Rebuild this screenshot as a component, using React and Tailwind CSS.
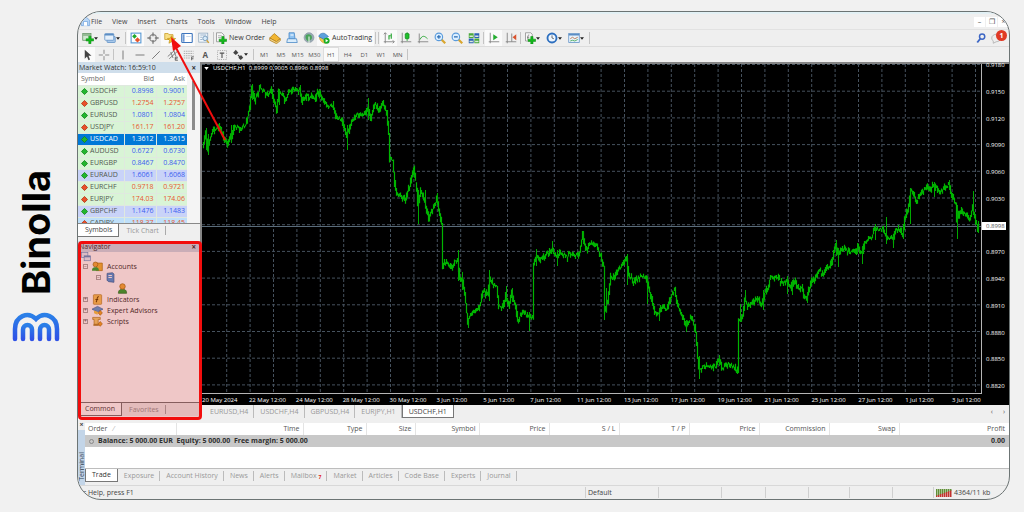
import clsx from 'clsx';

const MENUS = ['File', 'View', 'Insert', 'Charts', 'Tools', 'Window', 'Help'];
const TIMEFRAMES = ['M1', 'M5', 'M15', 'M30', 'H1', 'H4', 'D1', 'W1', 'MN'];

const SYMBOLS = [
  { name: 'USDCHF', bid: '0.8998', ask: '0.9001', up: true, tone: 'green' },
  { name: 'GBPUSD', bid: '1.2754', ask: '1.2757', up: false, tone: 'green' },
  { name: 'EURUSD', bid: '1.0801', ask: '1.0804', up: true, tone: 'green' },
  { name: 'USDJPY', bid: '161.17', ask: '161.20', up: false, tone: 'green' },
  { name: 'USDCAD', bid: '1.3612', ask: '1.3615', up: true, tone: 'selected' },
  { name: 'AUDUSD', bid: '0.6727', ask: '0.6730', up: true, tone: 'green' },
  { name: 'EURGBP', bid: '0.8467', ask: '0.8470', up: true, tone: 'green' },
  { name: 'EURAUD', bid: '1.6061', ask: '1.6068', up: true, tone: 'lavender' },
  { name: 'EURCHF', bid: '0.9718', ask: '0.9721', up: false, tone: 'green' },
  { name: 'EURJPY', bid: '174.03', ask: '174.06', up: false, tone: 'green' },
  { name: 'GBPCHF', bid: '1.1476', ask: '1.1483', up: true, tone: 'lavender' },
  { name: 'CADJPY', bid: '118.37', ask: '118.45', up: false, tone: 'blue' },
];

const ROW_TONES = {
  green: 'bg-[#d9f4d6]',
  lavender: 'bg-[#c9d3f8]',
  blue: 'bg-[#bfe0fa]',
  selected: 'bg-[#0078d7]',
};

const PRICES = [
  '0.9180', '0.9150', '0.9120', '0.9090', '0.9060', '0.9030', '0.8998',
  '0.8970', '0.8940', '0.8910', '0.8880', '0.8850', '0.8820',
];

const TIMES = [
  '20 May 2024', '22 May 12:00', '24 May 12:00', '28 May 12:00', '30 May 12:00', '3 Jun 12:00',
  '5 Jun 12:00', '7 Jun 12:00', '11 Jun 12:00', '13 Jun 12:00', '17 Jun 12:00', '19 Jun 12:00',
  '21 Jun 12:00', '25 Jun 12:00', '27 Jun 12:00', '1 Jul 12:00', '3 Jul 12:00',
];

const CHART_TABS = ['EURUSD,H4', 'USDCHF,H4', 'GBPUSD,H4', 'EURJPY,H1', 'USDCHF,H1'];

const TERMINAL_TABS = [
  'Trade', 'Exposure', 'Account History', 'News', 'Alerts', 'Mailbox',
  'Market', 'Articles', 'Code Base', 'Experts', 'Journal',
];

// Price path through the session, in chart units
const TRACE = [
  [203, 147], [206, 132], [208, 148], [211, 138], [213, 132], [220, 126], [224, 136], [227, 144], [232, 136],
  [235, 126], [240, 129], [246, 125], [250, 108], [252, 88], [255, 101], [260, 88], [263, 90], [268, 96],
  [271, 91], [274, 101], [277, 109], [279, 93], [282, 93], [285, 100], [290, 91], [295, 90], [300, 91],
  [302, 101], [307, 96], [315, 98], [319, 91], [323, 100], [327, 105], [333, 106], [337, 118], [342, 120],
  [347, 136], [352, 121], [357, 115], [365, 115], [368, 108], [371, 118], [375, 103], [379, 110], [383, 102],
  [387, 113], [389, 135], [390, 159], [393, 160], [395, 183], [397, 193], [401, 196], [405, 200], [410, 186],
  [414, 168], [417, 188], [418, 204], [421, 191], [425, 201], [429, 218], [432, 211], [437, 199], [440, 214],
  [442, 223], [443, 266], [447, 262], [452, 269], [455, 262], [458, 261], [460, 278], [463, 283], [466, 303],
  [468, 321], [472, 313], [477, 311], [481, 303], [483, 290], [488, 296], [490, 278], [493, 285], [497, 287],
  [499, 307], [503, 308], [506, 295], [509, 306], [512, 293], [516, 307], [518, 321], [523, 310], [529, 318],
  [533, 317], [534, 263], [536, 256], [540, 260], [545, 256], [552, 249], [557, 258], [560, 252], [567, 257],
  [570, 253], [576, 256], [580, 252], [583, 234], [586, 249], [592, 243], [597, 247], [601, 255], [604, 267],
  [605, 311], [608, 302], [611, 277], [615, 279], [618, 270], [622, 265], [627, 259], [629, 275], [634, 282],
  [640, 278], [645, 276], [648, 283], [651, 297], [655, 312], [659, 313], [663, 307], [667, 309], [671, 297],
  [675, 289], [678, 306], [683, 317], [686, 326], [692, 317], [696, 332], [698, 357], [699, 368], [703, 367],
  [710, 366], [713, 366], [716, 367], [719, 358], [722, 368], [728, 364], [733, 367], [738, 371], [739, 320],
  [743, 317], [745, 299], [748, 307], [753, 303], [757, 298], [762, 304], [765, 293], [768, 288], [771, 277],
  [778, 278], [782, 284], [787, 280], [791, 289], [795, 280], [799, 289], [802, 287], [804, 296], [807, 297],
  [811, 283], [815, 278], [819, 270], [823, 275], [827, 267], [830, 268], [833, 257], [836, 244], [838, 255],
  [842, 248], [848, 251], [855, 253], [858, 248], [862, 253], [865, 242], [872, 237], [875, 229], [883, 229],
  [887, 237], [893, 240], [896, 229], [900, 230], [903, 235], [905, 220], [909, 207], [911, 190], [913, 192],
  [917, 202], [921, 193], [927, 187], [930, 192], [934, 185], [940, 193], [945, 188], [949, 184], [952, 197],
  [956, 203], [957, 221], [961, 210], [966, 215], [970, 218], [973, 208], [975, 217], [978, 228], [979, 223],
];

// Long wicks: [x, high, low]
const WICKS = [
  [206, 128, 150], [208, 134, 155], [231, 125, 143], [252, 84, 100], [277, 100, 113], [279, 89, 105],
  [300, 85, 95], [319, 89, 97], [347, 125, 150], [368, 98, 120], [418, 190, 224], [425, 190, 207],
  [437, 193, 205], [458, 250, 281], [462, 272, 290], [468, 318, 328], [489, 270, 301], [506, 286, 300],
  [512, 288, 302], [529, 312, 331], [536, 249, 266], [552, 241, 252], [557, 250, 266], [583, 231, 244],
  [604, 266, 320], [606, 288, 312], [627, 254, 285], [647, 276, 304], [659, 308, 321], [686, 320, 332],
  [699, 356, 379], [719, 355, 366], [740, 304, 322], [745, 290, 302], [763, 290, 310], [787, 276, 294],
  [792, 280, 295], [807, 292, 303], [836, 240, 256], [838, 248, 267], [857, 243, 254], [862, 246, 264],
  [875, 224, 240], [886, 217, 244], [893, 236, 248], [903, 228, 239], [910, 188, 224], [934, 182, 197],
  [949, 180, 190], [957, 205, 239], [973, 191, 215], [978, 221, 233],
];

const range = n => Array.from({ length: n }, (_, i) => i);

// Small repeatable wobble so that neighbouring bars differ
const noise = (x, seed) => {
  const v = Math.sin(x * 12.9898 + seed * 78.233) * 43758.5453;
  return v - Math.floor(v);
};

function buildBars() {
  let d = '';
  for (let i = 1; i < TRACE.length; i++) {
    const [x0, y0] = TRACE[i - 1];
    const [x1, y1] = TRACE[i];
    const slope = (y1 - y0) / (x1 - x0);
    for (let x = x0; x < x1; x++) {
      const shift = (noise(x, 1) - 0.5) * 3;
      const y = y0 + slope * (x - x0) + shift;
      const hi = 0.5 + noise(x, 2) ** 2 * 3.5;
      const lo = 0.5 + noise(x, 3) ** 2 * 3.5;
      d += `M${x + 0.5} ${(Math.min(y, y + slope) - hi).toFixed(1)}V${(Math.max(y, y + slope) + lo).toFixed(1)}`;
    }
  }
  return d;
}

const BARS = buildBars();
const WICK_PATH = WICKS.map(([x, hi, lo]) => `M${x + 0.5} ${hi}V${lo}`).join('');

function Icon({ children, size = 'size-3' }) {
  return (
    <svg viewBox="0 0 16 16" className={clsx('shrink-0', size)} fill="none" aria-hidden="true">
      {children}
    </svg>
  );
}

const Plus = ({ x = 10, y = 10 }) => (
  <path d={`M${x - 1.5} ${y - 5}h3v3.5h3.5v3h-3.5v3.5h-3v-3.5h-3.5v-3h3.5z`} fill="#14b81c" stroke="#0a8a12" strokeWidth=".7" />
);

const ICONS = {
  newChart: (
    <Icon>
      <rect x="1" y="2" width="11" height="9" fill="#cfe6cf" stroke="#5d8f5d" />
      <path d="M1.5 4h10" stroke="#5d8f5d" strokeWidth="1.5" />
      <Plus x={10.5} y={10.5} />
    </Icon>
  ),
  profiles: (
    <Icon>
      <rect x="4" y="6" width="11" height="8" rx="1" fill="#a9c9ea" stroke="#5b8dc4" />
      <rect x="1" y="2" width="12" height="9" rx="1" fill="#e5f0fb" stroke="#5b8dc4" />
      <path d="M1 3.5h12" stroke="#5b8dc4" strokeWidth="2" />
    </Icon>
  ),
  marketWatch: (
    <Icon>
      <rect x="1.5" y="1.5" width="13" height="13" fill="#fff" stroke="#5b9bd5" strokeWidth="1.5" />
      <path d="M6 2.5l3.200 3.200L6 9 2.800 5.700z" fill="#1fa82c" />
      <path d="M10 7l3.500 3.500L10 14l-3.500-3.500z" fill="#e8542a" />
    </Icon>
  ),
  dataWindow: (
    <Icon>
      <circle cx="8" cy="8" r="4.500" stroke="#8a8a8a" strokeWidth="1.500" />
      <path d="M8 .5v5M8 10.500v5M.5 8h5M10.500 8h5" stroke="#7a7a7a" strokeWidth="1.800" />
    </Icon>
  ),
  navigator: (
    <Icon>
      <path d="M1 2h4.500l1 1.500H12V10H1z" fill="#f8df84" stroke="#c79a22" />
      <path d="M10 5l1.700 3.300 3.800.4-2.800 2.500.9 3.800-3.600-1.900-3.400 1.900.8-3.800-2.800-2.500 3.700-.4z" fill="#f7c52b" stroke="#b98a12" strokeWidth=".8" />
    </Icon>
  ),
  terminal: (
    <Icon>
      <rect x="1" y="2" width="14" height="12" rx="1" fill="#fff" stroke="#3f76bd" strokeWidth="1.500" />
      <path d="M3.500 3v10" stroke="#6f9bd4" strokeWidth="2.500" />
      <path d="M7 6h6" stroke="#b8cde6" />
    </Icon>
  ),
  tester: (
    <Icon>
      <rect x="1" y="1.500" width="12" height="12" fill="#f4f8fc" stroke="#8aa4bd" />
      <path d="M3 4h8M3 7h3M3 10h3" stroke="#7f9fbe" />
      <circle cx="9.500" cy="8.500" r="3" fill="#d7ebfa" stroke="#5d87ad" />
      <path d="M11.500 11l3 3.500" stroke="#d2a33d" strokeWidth="2" />
    </Icon>
  ),
  newOrder: (
    <Icon>
      <path d="M2 1h7l3 3v9H2z" fill="#f8f8f8" stroke="#8a8a8a" />
      <path d="M4 5h5M4 7.500h4" stroke="#9b9b9b" />
      <Plus x={10.5} y={11} />
    </Icon>
  ),
  book: (
    <Icon>
      <path d="M1 8l6-6 8 7-5 4z" fill="#f2b632" stroke="#ad7a14" />
      <path d="M1 8v3l9 4.500 5-4V9l-5 4z" fill="#f8d88a" stroke="#ad7a14" />
    </Icon>
  ),
  signals: (
    <Icon>
      <path d="M4 1h7l1 8H4z" fill="#8fc3f2" stroke="#4384c4" />
      <path d="M2 9h12l1 5H1z" fill="#d9ecfb" stroke="#4384c4" />
      <path d="M6 4h4" stroke="#fff" strokeWidth="1.500" />
    </Icon>
  ),
  globe: (
    <Icon>
      <circle cx="8" cy="7.500" r="6.500" fill="#9aa9b5" stroke="#8b99a4" />
      <path d="M4 4c3-2 8-1 8 3s-3 3-4 6c-3-1-6-5-4-9z" fill="#49a35b" />
      <path d="M8 6v9" stroke="#e9f2ea" strokeWidth="1.500" />
    </Icon>
  ),
  autoTrading: (
    <Icon>
      <path d="M2 7c0 5 5 8 8 8l2-5-4-2z" fill="#f4c949" stroke="#b78d1f" strokeWidth=".8" />
      <path d="M1 6c1-4 5-5 8-4l5 4-6 4z" fill="#5ba0dc" stroke="#2e6fae" strokeWidth=".8" />
      <circle cx="11.500" cy="11.500" r="4" fill="#17ad25" />
      <path d="M10.200 9.300l3.500 2.200-3.500 2.200z" fill="#fff" />
    </Icon>
  ),
  barChart: (
    <Icon>
      <path d="M3 1v14M1 13h14M1 3l2-2 2 2M13 11l2 2-2 2" stroke="#858585" strokeWidth="1.200" />
      <path d="M8 10V5h2M11 9V2" stroke="#21a32c" strokeWidth="1.500" />
    </Icon>
  ),
  candles: (
    <Icon>
      <path d="M3 1v14M1 13h14" stroke="#858585" strokeWidth="1.200" />
      <path d="M9.500 0v12" stroke="#21a32c" />
      <rect x="7" y="2" width="5" height="7" rx="1" fill="#1fc02c" stroke="#118b1b" />
    </Icon>
  ),
  lineChart: (
    <Icon>
      <path d="M3 2v13M1 13h14" stroke="#858585" strokeWidth="1.200" />
      <path d="M4 10c3-6 6-5 10-1" stroke="#21a32c" strokeWidth="1.200" />
    </Icon>
  ),
  zoomIn: (
    <Icon>
      <path d="M10 10l5 5" stroke="#d9a62f" strokeWidth="3" />
      <circle cx="6.500" cy="6.500" r="5" fill="#dcefff" stroke="#5a9bdc" strokeWidth="1.500" />
      <path d="M6.500 4v5M4 6.500h5" stroke="#2a6bb3" strokeWidth="1.500" />
    </Icon>
  ),
  zoomOut: (
    <Icon>
      <path d="M10 10l5 5" stroke="#d9a62f" strokeWidth="3" />
      <circle cx="6.500" cy="6.500" r="5" fill="#dcefff" stroke="#5a9bdc" strokeWidth="1.500" />
      <path d="M4 6.500h5" stroke="#2a6bb3" strokeWidth="1.500" />
    </Icon>
  ),
  tile: (
    <Icon>
      <path d="M1 1.500h6.500V8H1zM8.500 8.500H15V15H8.500z" fill="#4aa83c" />
      <path d="M8.500 1.500H15V8H8.500zM1 8.500h6.500V15H1z" fill="#2c62b5" />
      <path d="M2 5.500h4.500M9.500 5.500H14M2 12.500h4.500M9.500 12.500H14" stroke="#dcebdc" strokeWidth="2" />
    </Icon>
  ),
  autoScroll: (
    <Icon>
      <path d="M3 1v14M1 13h14" stroke="#858585" strokeWidth="1.200" />
      <path d="M7 3l6 4-6 4z" fill="#24ad30" />
    </Icon>
  ),
  chartShift: (
    <Icon>
      <path d="M3 1v14M1 13h14M9 2v11" stroke="#858585" strokeWidth="1.200" />
      <path d="M15 3l-5 4 5 4z" fill="#d9532e" />
    </Icon>
  ),
  indicators: (
    <Icon>
      <path d="M2 1h7l2 2v9H2z" fill="#f8f8f8" stroke="#8a8a8a" />
      <path d="M7 4c-2 0-2 1-2 6M4 7h3" stroke="#666" />
      <Plus x={10.5} y={11} />
    </Icon>
  ),
  clock: (
    <Icon>
      <circle cx="8" cy="8" r="6" fill="#eef6ff" stroke="#2d6fbf" strokeWidth="2.500" />
      <path d="M8 4.500V8l2.500 1" stroke="#444" />
    </Icon>
  ),
  template: (
    <Icon>
      <rect x="1" y="2" width="14" height="12" fill="#e8f3fd" stroke="#5b8dc4" />
      <path d="M1 3.500h14" stroke="#5b8dc4" strokeWidth="2" />
      <path d="M3 9l3-2 3 2 4-2" stroke="#b2622c" />
      <path d="M3 12l3-1 3 1 4-2" stroke="#2e9c3c" />
    </Icon>
  ),
  cursor: (
    <Icon>
      <path d="M5 1v12l3-3 2 5 2-1-2-5h4z" fill="#444" />
    </Icon>
  ),
  cross: (
    <Icon>
      <path d="M8 1v5.500M8 9.500V15M1 8h5.500M9.500 8H15" stroke="#8a8a8a" strokeWidth="1.300" />
    </Icon>
  ),
  vLine: <Icon><path d="M8 2v12" stroke="#777" strokeWidth="1.300" /></Icon>,
  hLine: <Icon><path d="M2 8h12" stroke="#777" strokeWidth="1.300" /></Icon>,
  trend: <Icon><path d="M3 13L13 3" stroke="#777" strokeWidth="1.300" /></Icon>,
  channel: (
    <Icon>
      <path d="M1 10l9-8M3 13L14 3M5 4l3 8M9 2l3 8" stroke="#777" strokeWidth="1.200" />
      <path d="M14.500 11H11v4h3.500M11 13h3" stroke="#444" />
    </Icon>
  ),
  fibo: (
    <Icon>
      <path d="M1 3h13M1 6h13M1 9h13M1 12h8" stroke="#999" strokeDasharray="2 1" />
      <path d="M14.500 10.500H11.500V15M11.500 13h2.500" stroke="#444" />
    </Icon>
  ),
  label: (
    <Icon>
      <rect x="2" y="2" width="12" height="12" stroke="#999" strokeDasharray="1.500 1.500" />
      <path d="M5 5.500h6M8 5.500V12" stroke="#555" strokeWidth="1.500" />
    </Icon>
  ),
  arrows: (
    <Icon>
      <path d="M5 1l3.500 4-3.500 3-3.500-3z" fill="#444" />
      <path d="M8 8l3 3" stroke="#444" strokeWidth="1.500" />
      <path d="M12 8l3 3.500-3.500 3-3-3z" fill="#444" />
    </Icon>
  ),
};

function Caret() {
  return (
    <svg viewBox="0 0 6 4" className="h-[3px] w-1 shrink-0" aria-hidden="true">
      <path d="M0 0h6L3 4z" fill="#222" />
    </svg>
  );
}

function Divider() {
  return <span className="mx-px my-0.5 w-px shrink-0 self-stretch bg-[#c4c4c4]" />;
}

function ToolButton({ icon, label, active, className }) {
  return (
    <button
      aria-label={label}
      className={clsx('flex h-4 w-[17px] shrink-0 items-center justify-center', active && 'bg-[#fafafa]', className)}
    >
      {ICONS[icon]}
    </button>
  );
}

function SplitButton({ icon, label }) {
  return (
    <button aria-label={label} className="flex h-4 w-[22px] shrink-0 items-center pl-0.5">
      {ICONS[icon]}
      <Caret />
    </button>
  );
}

function Brand() {
  return (
    <aside className="flex w-[77px] shrink-0 flex-col items-center justify-center gap-4 pr-1.5">
      <span className="rotate-180 font-['Inter'] text-[38px] leading-[44px] font-bold text-black [writing-mode:vertical-rl]">
        Binolla
      </span>
      <svg viewBox="0 0 48 30" className="h-[30px] w-12" fill="none" aria-hidden="true">
        <defs>
          <linearGradient id="brand" x1="0" y1="0" x2="0" y2="1">
            <stop offset="0" stopColor="#2b80e8" />
            <stop offset="1" stopColor="#2f52e6" />
          </linearGradient>
        </defs>
        <g stroke="url(#brand)" strokeWidth="4.500" strokeLinecap="round">
          <path d="M3 27V17C3 4 16-1 24 7C32-1 45 4 45 17V27" />
          <path d="M11 27V17.500a4.500 4.500 0 0 1 9 0V27" />
          <path d="M28 27V17.500a4.500 4.500 0 0 1 9 0V27" />
        </g>
      </svg>
    </aside>
  );
}

function MenuBar() {
  return (
    <header className="flex h-[17px] shrink-0 items-center border-t-2 border-[#e3f1f5] pl-0.5 text-[#444]">
      <Icon size="size-[11px]">
        <path d="M2 6l6-5 6 5v8H2z" fill="#b9d7f7" stroke="#6a9fdc" />
        <path d="M5 14V8h6v6" fill="#fff" stroke="#6a9fdc" />
      </Icon>
      <nav className="flex gap-2.5 pt-px">
        {MENUS.map(m => (
          <button key={m}>{m}</button>
        ))}
      </nav>
      <div className="ml-auto flex gap-px">
        {['–', '❐', '×'].map((c, i) => (
          <button
            key={c}
            aria-label={['Minimize', 'Restore', 'Close'][i]}
            className="flex h-2.5 w-[11px] items-center justify-center bg-white text-[#555]"
          >
            {c}
          </button>
        ))}
      </div>
    </header>
  );
}

function StandardToolbar() {
  return (
    <div className="flex h-[17px] shrink-0 items-center border-t border-[#e2e2e2] pl-0.5 text-[#333]">
      <SplitButton icon="newChart" label="New chart" />
      <SplitButton icon="profiles" label="Profiles" />
      <Divider />
      <ToolButton icon="marketWatch" label="Market Watch" active />
      <ToolButton icon="dataWindow" label="Data Window" />
      <ToolButton icon="navigator" label="Navigator" active />
      <ToolButton icon="terminal" label="Terminal" active />
      <ToolButton icon="tester" label="Strategy Tester" />
      <Divider />
      <button className="flex w-[51px] items-center gap-0.5 whitespace-nowrap">
        {ICONS.newOrder}
        New Order
      </button>
      <ToolButton icon="book" label="MetaEditor" />
      <ToolButton icon="signals" label="Signals" />
      <ToolButton icon="globe" label="Community" />
      <button className="flex h-4 w-[57px] items-center gap-0.5 bg-[#fafafa] pl-px whitespace-nowrap">
        {ICONS.autoTrading}
        AutoTrading
      </button>
      <Divider />
      <Divider />
      <ToolButton icon="barChart" label="Bar chart" active />
      <ToolButton icon="candles" label="Candlesticks" />
      <ToolButton icon="lineChart" label="Line chart" />
      <ToolButton icon="zoomIn" label="Zoom in" />
      <ToolButton icon="zoomOut" label="Zoom out" />
      <ToolButton icon="tile" label="Tile windows" />
      <Divider />
      <ToolButton icon="autoScroll" label="Auto scroll" active />
      <ToolButton icon="chartShift" label="Chart shift" />
      <Divider />
      <SplitButton icon="indicators" label="Indicators" />
      <SplitButton icon="clock" label="Periods" />
      <SplitButton icon="template" label="Templates" />
      <Divider />
      <div className="ml-auto flex items-center gap-1 pr-0.5">
        <button aria-label="Search">
          <Icon>
            <circle cx="9.500" cy="6" r="3.500" stroke="#3d66c4" strokeWidth="2" />
            <path d="M7 9l-4 5" stroke="#3d66c4" strokeWidth="2.500" />
          </Icon>
        </button>
        <button className="relative flex h-4 w-4 items-center" aria-label="Notifications">
          <Icon>
            <path d="M1 8c0-3 3-5 6-5s6 2 6 5-3 5-6 5l-4 2v-3C2 11 1 10 1 8z" fill="#eee" stroke="#aaa" />
          </Icon>
          <span className="absolute top-0 right-0 flex size-[11px] items-center justify-center rounded-full bg-[#e03a26] font-bold text-white">
            1
          </span>
        </button>
      </div>
    </div>
  );
}

function LineToolbar() {
  return (
    <div className="flex h-4 shrink-0 items-center border-t border-[#dcdcdc] text-[6px] text-[#555]">
      <ToolButton icon="cursor" label="Cursor" active />
      <ToolButton icon="cross" label="Crosshair" />
      <Divider />
      <div className="grid w-[115px] grid-cols-7 justify-items-center">
        <ToolButton icon="vLine" label="Vertical line" />
        <ToolButton icon="hLine" label="Horizontal line" />
        <ToolButton icon="trend" label="Trendline" />
        <ToolButton icon="channel" label="Channel" />
        <ToolButton icon="fibo" label="Fibonacci" />
        <button className="text-[8px] font-bold" aria-label="Text">A</button>
        <ToolButton icon="label" label="Text label" />
      </div>
      <SplitButton icon="arrows" label="Arrows" />
      <Divider />
      <div className="grid h-full w-[151px] grid-cols-9 pl-px">
        {TIMEFRAMES.map(t => (
          <button key={t} className={clsx(t === 'H1' && 'border border-[#ddd] bg-[#fafafa]')}>
            {t}
          </button>
        ))}
      </div>
      <Divider />
    </div>
  );
}

function PanelTitle({ children }) {
  return (
    <div className="flex h-[11px] shrink-0 items-center justify-between bg-[#cfdeeb] pr-1 pl-px text-[#333]">
      <span>{children}</span>
      <button aria-label={`Close ${children}`} className="text-[8px] font-bold">×</button>
    </div>
  );
}

function PanelTabs({ tabs }) {
  return (
    <div className="flex h-[13px] shrink-0 bg-[#efefef]">
      {tabs.map((t, i) => (
        <button
          key={t}
          className={clsx(
            'border-[#777] pr-1.5 pl-[7px]',
            i === 0 ? 'border-r border-b bg-white text-[#444]' : 'text-[#999]',
          )}
        >
          {t}
        </button>
      ))}
      <span className="my-0.5 w-px bg-[#aaa]" />
      <span className="flex-1" />
    </div>
  );
}

function MarketWatch() {
  return (
    <section className="shrink-0 bg-white">
      <PanelTitle>Market Watch: 16:59:10</PanelTitle>
      <div className="flex h-[151px] overflow-hidden border-b border-[#888]">
        <table className="w-[109px] table-fixed border-collapse self-start">
          <colgroup>
            <col className="w-[46px]" />
            <col className="w-8" />
            <col />
          </colgroup>
          <thead>
            <tr className="h-3 text-[#666]">
              <th className="pl-[3px] text-left font-normal">Symbol</th>
              <th className="pr-0.5 text-right font-normal">Bid</th>
              <th className="pr-0.5 text-right font-normal">Ask</th>
            </tr>
          </thead>
          <tbody>
            {SYMBOLS.map(s => {
              const selected = s.tone === 'selected';
              const price = selected ? 'text-white' : s.up ? 'text-[#3a5cf0]' : 'text-[#e8562f]';
              return (
                <tr key={s.name} className={clsx('h-3', ROW_TONES[s.tone])}>
                  <td className={clsx('border-t border-[#dfe9df] pl-[3px]', selected ? 'text-white' : 'text-[#505850]')}>
                    <span className="flex items-center gap-0.5">
                      <svg viewBox="0 0 8 8" className="size-[7px]" aria-hidden="true">
                        <path
                          d="M4 .5L7.500 4 4 7.500.5 4z"
                          fill={s.up ? '#22b52e' : '#e8502a'}
                          stroke={s.up ? '#128a1c' : '#b5391a'}
                        />
                      </svg>
                      {s.name}
                    </span>
                  </td>
                  <td className={clsx('border-t border-l border-[#dfe9df] pr-0.5 text-right', price)}>{s.bid}</td>
                  <td className={clsx('border-t border-l border-[#dfe9df] pr-0.5 text-right', price)}>{s.ask}</td>
                </tr>
              );
            })}
          </tbody>
        </table>
        <div className="flex flex-1 justify-center bg-[#f4f4f4] pt-2">
          <span className="h-[49px] w-[3px] bg-[#8b8b8b]" />
        </div>
      </div>
      <PanelTabs tabs={['Symbols', 'Tick Chart']} />
    </section>
  );
}

function TreeRow({ indent, box, icon, children }) {
  return (
    <li className={clsx('flex h-[11px] items-center gap-1', indent)}>
      {box && (
        <span className="flex size-[5px] items-center justify-center border border-[#aaa] text-[5px] leading-none text-[#555]">
          {box}
        </span>
      )}
      <Icon size="size-[11px]">{icon}</Icon>
      {children}
    </li>
  );
}

const person = (
  <>
    <path d="M2 15c0-5 3-6 6-6s6 1 6 6z" fill="#2eab38" stroke="#197323" />
    <circle cx="8" cy="5" r="4" fill="#f0b040" stroke="#9b6f16" />
  </>
);

function Navigator() {
  return (
    <section className="relative mt-1 flex flex-1 flex-col bg-white text-[#333]">
      <PanelTitle>Navigator</PanelTitle>
      <div className="flex h-[9px] items-center pl-[3px]">
        <Icon size="size-2.5">
          <rect x="1" y="1" width="10" height="8" fill="#e5f0fb" stroke="#5b8dc4" />
          <rect x="5" y="6" width="10" height="8" fill="#e5f0fb" stroke="#5b8dc4" />
          <path d="M5 7.500h10" stroke="#5b8dc4" strokeWidth="2" />
        </Icon>
      </div>
      <ul className="pl-[5px]">
        <TreeRow
          box="−"
          icon={
            <>
              <path d="M6 3h9v11H6z" fill="#f0b83a" stroke="#a87a16" />
              <circle cx="5" cy="5" r="3.500" fill="#f0b040" stroke="#9b6f16" />
              <path d="M0 14c0-5 3-5 5-5s5 0 5 5z" fill="#2eab38" />
            </>
          }
        >
          Accounts
        </TreeRow>
        <TreeRow
          indent="pl-[13px]"
          box="−"
          icon={
            <>
              <path d="M3 2l8-1 2 2v12l-8-1-2-2z" fill="#4f9be0" stroke="#28639c" />
              <path d="M5 5h5M5 8h5" stroke="#fff" strokeWidth="1.500" />
            </>
          }
        />
        <TreeRow indent="pl-[34px]" icon={person} />
        <TreeRow
          box="+"
          icon={
            <>
              <rect x="2" y="1" width="12" height="14" rx="1" fill="#f6c75c" stroke="#b3842a" />
              <path d="M10 4c-3-1-2 4-4 8M5 8h4" stroke="#664708" strokeWidth="1.500" />
            </>
          }
        >
          Indicators
        </TreeRow>
        <TreeRow
          box="+"
          icon={
            <>
              <path d="M0 6l8-4 8 4-8 4z" fill="#5ba0dc" stroke="#2e6fae" />
              <path d="M3 8v4l5 2 1-4z" fill="#f4c949" />
              <path d="M12 8l3 3.500-3 3.500-3-3.500z" fill="#f0a92a" stroke="#a97012" />
            </>
          }
        >
          Expert Advisors
        </TreeRow>
        <TreeRow
          box="+"
          icon={
            <>
              <path d="M1 2h11v3H9v7H3V5H1z" fill="#f3cf72" stroke="#a97a1c" />
              <path d="M2 13h8" stroke="#a97a1c" strokeWidth="2" />
              <path d="M12 8l3 3.500-3 3.500-3-3.500z" fill="#f0a92a" stroke="#a97012" />
            </>
          }
        >
          Scripts
        </TreeRow>
      </ul>
      <div className="mt-auto border-t border-[#777] pb-1">
        <PanelTabs tabs={['Common', 'Favorites']} />
      </div>
      {/* Highlight frame */}
      <div className="pointer-events-none absolute inset-y-0 left-0 -right-0.5 z-10 rounded border-3 border-[#f20d0d] bg-[#b40000]/22" />
    </section>
  );
}

function Chart() {
  return (
    <div className="flex min-w-0 flex-1 flex-col">
      <div className="relative flex flex-1 flex-col border-t-2 border-l-2 border-[#858585] bg-black text-[6px] leading-[8px] text-white">
        <div className="flex flex-1">
          <div className="relative min-w-0 flex-1 border-r border-b border-[#b5b5b5]">
            <svg
              viewBox="202 64 779 329"
              preserveAspectRatio="none"
              className="absolute inset-0 h-full w-full"
              fill="none"
              role="img"
              aria-label="USDCHF hourly price"
            >
              <g stroke="#46525e" strokeDasharray="3 2">
                {range(33).map(i => (
                  <path key={i} d={`M${226.7 + i * 23.4} 64V393`} />
                ))}
                {range(13).map(i => (
                  <path key={i} d={`M202 ${64.5 + i * 26.7}H981`} />
                ))}
              </g>
              <path d="M202 226.500H981" stroke="#5a6c7b" />
              <path d={BARS} stroke="#00b400" strokeWidth="1.200" />
              <path d={WICK_PATH} stroke="#00a800" />
            </svg>
            <p className="absolute top-0 left-0.5 flex items-center gap-1 whitespace-pre">
              <svg viewBox="0 0 6 4" className="h-[3px] w-[5px]" aria-hidden="true">
                <path d="M0 0h6L3 4z" fill="#fff" />
              </svg>
              USDCHF,H1  0.8999 0.9005 0.8996 0.8998
            </p>
          </div>
          <div className="-mt-[3px] flex w-[27px] flex-col justify-between pb-1">
            {PRICES.map((p, i) => (
              <span key={p} className={clsx('w-6 pl-1', i === 6 && 'bg-white text-[#555]')}>
                {p}
              </span>
            ))}
          </div>
        </div>
        <div className="flex h-[11px] items-center pr-2.5">
          {TIMES.map(t => (
            <span key={t} className="w-0 flex-1 whitespace-nowrap">
              {t}
            </span>
          ))}
        </div>
      </div>
      <div className="flex h-[15px] shrink-0 items-start pl-1 text-[#999]">
        {CHART_TABS.map((t, i) => (
          <button
            key={t}
            className={clsx(
              'h-[13px] pt-px pl-1.5',
              i === 4 ? 'border border-t-0 border-[#777] bg-white pr-1.5 text-[#444]' : 'border-r border-[#bbb] pr-[5px]',
            )}
          >
            {t}
          </button>
        ))}
        <div className="ml-auto flex h-[13px] items-center gap-2.5 pr-1 text-[#555]">
          <button aria-label="Previous tab">‹</button>
          <button aria-label="Next tab">›</button>
        </div>
      </div>
    </div>
  );
}

function Terminal() {
  const head = 'border-r border-[#e4e4e4] pr-[3px] text-right font-normal';
  return (
    <section className="flex h-[65px] shrink-0">
      <div className="flex w-[7px] shrink-0 flex-col items-center justify-between bg-[#c3d5e8] pb-1">
        <button aria-label="Close terminal" className="w-full bg-[#efefef] font-bold text-[#444]">×</button>
        <span className="rotate-180 leading-[7px] text-[#345] [writing-mode:vertical-rl]">Terminal</span>
      </div>
      <div className="flex min-w-0 flex-1 flex-col pt-[3px]">
        <div className="h-[46px] border-b border-[#bdbdbd] bg-white">
          <table className="w-full table-fixed border-collapse">
            <colgroup>
              <col className="w-[91px]" />
              <col className="w-[127px]" />
              <col className="w-[63px]" />
              <col className="w-[49px]" />
              <col className="w-16" />
              <col className="w-[70px]" />
              <col className="w-[70px]" />
              <col className="w-[70px]" />
              <col className="w-[70px]" />
              <col className="w-[70px]" />
              <col className="w-[70px]" />
              <col />
            </colgroup>
            <thead>
              <tr className="h-3 text-[#555]">
                <th className="border-r border-[#e4e4e4] pl-[3px] text-left font-normal">
                  Order <span className="pl-1 text-[#aaa]">⁄</span>
                </th>
                <th className={head}>Time</th>
                <th className={head}>Type</th>
                <th className={head}>Size</th>
                <th className={head}>Symbol</th>
                <th className={head}>Price</th>
                <th className={head}>S / L</th>
                <th className={head}>T / P</th>
                <th className={head}>Price</th>
                <th className={head}>Commission</th>
                <th className={head}>Swap</th>
                <th className="pr-1 text-right font-normal">Profit</th>
              </tr>
            </thead>
            <tbody>
              <tr className="h-3 bg-[#c8c8c8] font-bold text-[#2e2e2e]">
                <td colSpan={11} className="pl-1">
                  <span className="flex items-center gap-1 whitespace-pre">
                    <span className="size-[5px] rounded-full border border-[#888]" />
                    Balance: 5 000.00 EUR  Equity: 5 000.00  Free margin: 5 000.00
                  </span>
                </td>
                <td className="pr-1 text-right">0.00</td>
              </tr>
            </tbody>
          </table>
        </div>
        <div className="flex h-[13px] items-center text-[#999]">
          {TERMINAL_TABS.map((t, i) => (
            <button
              key={t}
              className={clsx(
                'whitespace-nowrap',
                i === 0
                  ? 'h-full border-r border-b border-l border-[#777] bg-white px-1.5 text-[#333]'
                  : 'border-r border-[#bbb] pr-[5px] pl-1.5',
              )}
            >
              {t}
              {t === 'Mailbox' && <sub className="pl-0.5 text-[5px] font-bold text-[#e02020]">7</sub>}
            </button>
          ))}
        </div>
      </div>
    </section>
  );
}

function StatusBar() {
  const cell = 'my-px border-l border-[#cfcfcf] pl-0.5';
  return (
    <footer className="flex h-3.5 shrink-0 items-stretch border-t border-[#d8d8d8] leading-[12px] text-[#444]">
      <span className="flex-1 pt-px pl-px">or Help, press F1</span>
      <span className={clsx(cell, 'w-[73px]')}>Default</span>
      <span className={clsx(cell, 'w-[63px]')} />
      <span className={clsx(cell, 'w-11')} />
      <span className={clsx(cell, 'w-[43px]')} />
      <span className={clsx(cell, 'w-[41px]')} />
      <span className={clsx(cell, 'w-[43px]')} />
      <span className={clsx(cell, 'w-[41px]')} />
      <span className={clsx(cell, 'flex w-[76px] items-center gap-0.5')}>
        <svg viewBox="0 0 16 8" className="h-2 w-4" aria-hidden="true">
          {range(8).map(i => (
            <g key={i}>
              <path d={`M${i * 2} 0h1.500v${7 - i * 0.7}h-1.500z`} fill="#5f8f35" />
              <path d={`M${i * 2} 8h1.500v-${1.5 + i * 0.7}h-1.500z`} fill="#c2322e" />
            </g>
          ))}
        </svg>
        4364/11 kb
      </span>
    </footer>
  );
}

export default function App() {
  return (
    <div className="flex min-h-screen bg-[#f1f1f1] font-['Open_Sans','Noto_Sans',sans-serif] text-[7px] leading-[10px]">
      <Brand />
      <main className="relative mt-[11px] mr-3.5 mb-3 flex min-w-0 flex-1 flex-col overflow-hidden rounded-3xl border border-[#6c7474] bg-[#efefef]">
        <MenuBar />
        <StandardToolbar />
        <LineToolbar />
        <div className="flex flex-1">
          <div className="flex w-[122px] shrink-0 flex-col">
            <MarketWatch />
            <Navigator />
          </div>
          <Chart />
        </div>
        <Terminal />
        <StatusBar />
        {/* Pointer from the chart to the Navigator button */}
        <svg
          viewBox="0 0 60 110"
          className="pointer-events-none absolute top-6 left-[90px] z-20 h-[110px] w-[60px]"
          aria-hidden="true"
        >
          <path d="M57 104L6 8" stroke="#f00d0d" strokeWidth="2" />
          <path d="M3 1l10 9-8 5z" fill="#f00d0d" />
        </svg>
      </main>
    </div>
  );
}
